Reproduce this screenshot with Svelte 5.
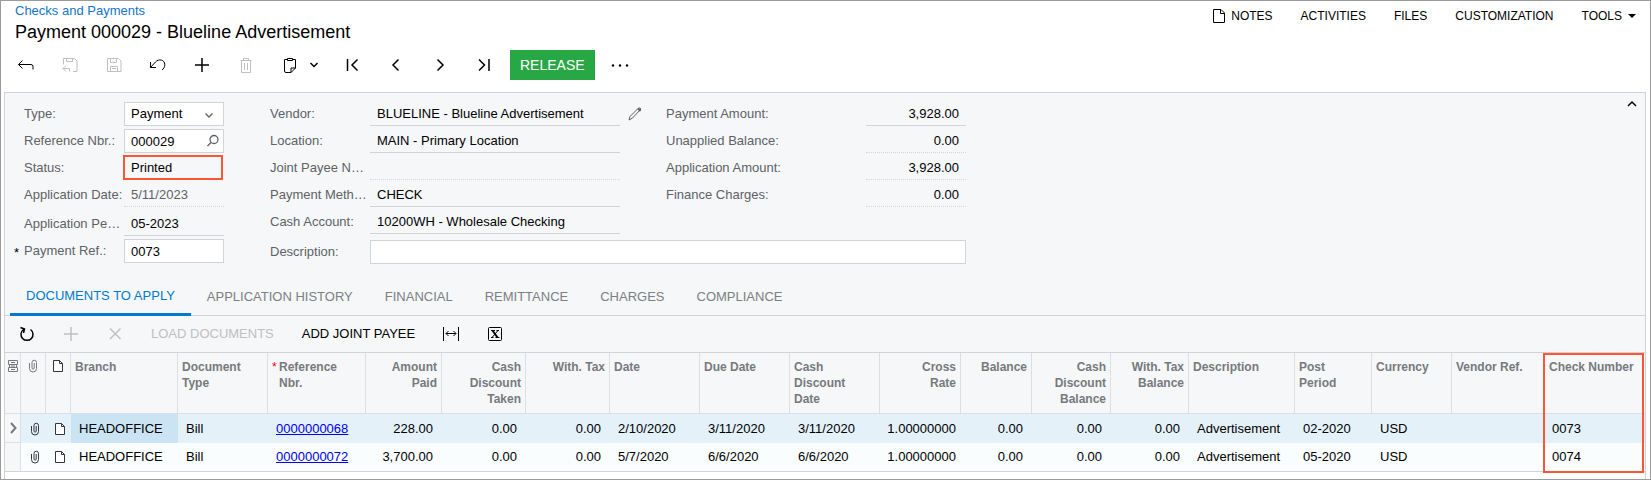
<script>
  const menu = ['ACTIVITIES', 'FILES', 'CUSTOMIZATION'];

  const left = [
    { id: 'type', label: 'Type:', value: 'Payment', kind: 'select' },
    { id: 'refnbr', label: 'Reference Nbr.:', value: '000029', kind: 'lookup' },
    { id: 'status', label: 'Status:', value: 'Printed', kind: 'marked' },
    { id: 'appdate', label: 'Application Date:', value: '5/11/2023', kind: 'dotted muted' },
    { id: 'period', label: 'Application Period:', value: '05-2023', kind: 'line' },
    { id: 'payref', label: 'Payment Ref.:', value: '0073', kind: 'box', required: true },
  ];

  const middle = [
    { id: 'vendor', label: 'Vendor:', value: 'BLUELINE - Blueline Advertisement', kind: 'line', edit: true },
    { id: 'location', label: 'Location:', value: 'MAIN - Primary Location', kind: 'line' },
    { id: 'joint', label: 'Joint Payee Name:', value: '', kind: 'dotted' },
    { id: 'method', label: 'Payment Method:', value: 'CHECK', kind: 'line' },
    { id: 'cash', label: 'Cash Account:', value: '10200WH - Wholesale Checking', kind: 'line' },
  ];

  const totals = [
    { id: 'amount', label: 'Payment Amount:', value: '3,928.00', kind: 'line' },
    { id: 'unapplied', label: 'Unapplied Balance:', value: '0.00', kind: 'dotted' },
    { id: 'applied', label: 'Application Amount:', value: '3,928.00', kind: 'dotted' },
    { id: 'charges', label: 'Finance Charges:', value: '0.00', kind: 'dotted' },
  ];

  const tabs = ['DOCUMENTS TO APPLY', 'APPLICATION HISTORY', 'FINANCIAL', 'REMITTANCE', 'CHARGES', 'COMPLIANCE'];
  let activeTab = $state('DOCUMENTS TO APPLY');

  const columns = [
    { label: 'Branch', width: 107 },
    { label: 'Document\nType', width: 90 },
    { label: 'Reference\nNbr.', width: 98, required: true, link: true },
    { label: 'Amount\nPaid', width: 76, num: true },
    { label: 'Cash\nDiscount\nTaken', width: 84, num: true },
    { label: 'With. Tax', width: 84, num: true },
    { label: 'Date', width: 90 },
    { label: 'Due Date', width: 90 },
    { label: 'Cash\nDiscount\nDate', width: 90 },
    { label: 'Cross\nRate', width: 81, num: true, tight: true },
    { label: 'Balance', width: 71, num: true },
    { label: 'Cash\nDiscount\nBalance', width: 79, num: true },
    { label: 'With. Tax\nBalance', width: 78, num: true },
    { label: 'Description', width: 106 },
    { label: 'Post\nPeriod', width: 77 },
    { label: 'Currency', width: 80 },
    { label: 'Vendor Ref.', width: 92 },
    { label: 'Check Number', width: 101 },
  ];

  const rows = [
    ['HEADOFFICE', 'Bill', '0000000068', '228.00', '0.00', '0.00', '2/10/2020', '3/11/2020', '3/11/2020', '1.00000000', '0.00', '0.00', '0.00', 'Advertisement', '02-2020', 'USD', '', '0073'],
    ['HEADOFFICE', 'Bill', '0000000072', '3,700.00', '0.00', '0.00', '5/7/2020', '6/6/2020', '6/6/2020', '1.00000000', '0.00', '0.00', '0.00', 'Advertisement', '05-2020', 'USD', '', '0074'],
  ];

  const icons = {
    back: 'M8.5 7.5l-4 4 4 4M4.5 11.5H17q2 0 2 2v3',
    saveClose: 'M5.5 11.5v-6h11l2.5 2.5v10.5h-4M8.5 5.5v3h6v-3M8 12.5l-3 3 3 3M5 15.5h6.5v3',
    save: 'M5.5 5.5h11l2.5 2.5v10.5h-13.5zM8.5 5.5v4h6v-4M8.5 18.5v-5h7v5M10 15.5h4',
    undo: 'M4.5 9v5.5h5.5M4.5 14.5L9.5 9C12.5 5.5 18.8 6.5 18.8 11.8c0 2.4-1.2 4-2.8 5.2',
    plus: 'M5 12h14M12 5v14',
    trash: 'M6.5 7.5h11M9.5 7.5v-2h5v2M7.5 7.5v12h9v-12M10.5 10v7M13.5 10v7',
    clip: 'M9.5 6.5h-3v11.500q0 1.500 1.500 1.500h5l4.500-4.500v-8.500h-3M9.5 7.500v-2h5v2zM13 19.500v-4.500h4.500',
    first: 'M7.5 6v12M17.5 6.5l-5.5 5.5 5.5 5.5',
    prev: 'M14.5 6.5l-5.5 5.5 5.5 5.5',
    next: 'M9.5 6.5l5.5 5.5-5.5 5.5',
    last: 'M7 6.5l5.5 5.5-5.5 5.5M17 6v12',
    cross: 'M7 6.5l10.5 10.5M17.5 6.5l-10.5 10.5',
    refresh: 'M8.5 7.5A6 6 0 1 0 15.500 7.500M5.500 5.500l4 1.500-1 4',
    fit: 'M4.5 5v14M19.5 5v14M7 11.5h10M9.5 9l-2.5 2.5 2.5 2.5M14.5 9l2.5 2.5-2.5 2.5',
  };
</script>

{#snippet icon(name, thick = false)}
  <svg class="icon" class:thick viewBox="0 0 24 24" aria-hidden="true"><path d={icons[name]} /></svg>
{/snippet}

{#snippet paperclip()}
  <svg class="small" viewBox="0 0 12 14" aria-hidden="true">
    <path d="M2.500 4v5.500a3.500 3.500 0 0 0 7 0V3.500a2 2 0 0 0-4.500 0V9a1 1 0 0 0 2.200 0V4" />
  </svg>
{/snippet}

{#snippet page()}
  <svg class="small" viewBox="0 0 12 14" aria-hidden="true">
    <path class="paper" d="M1.500 1.500h6l3 3v8h-9z" /><path d="M7.500 1.500v3h3" />
  </svg>
{/snippet}

{#snippet field(f, right = false)}
  <label for={f.id}>{f.label}</label>
  <div class="control {f.kind}" class:right>
    {#if f.kind === 'select'}
      <select id={f.id}><option>{f.value}</option></select>
      <svg class="inner" viewBox="0 0 16 16" aria-hidden="true"><path d="M2.500 6.500l3.500 3.500 3.500-3.500" /></svg>
    {:else}
      <input id={f.id} type="text" value={f.value} readonly={f.kind !== 'box' && f.kind !== 'lookup'} />
    {/if}
    {#if f.kind === 'lookup'}
      <svg class="inner" viewBox="0 0 16 16" aria-hidden="true"><circle cx="11" cy="5.500" r="4" /><path d="M8 8.500l-3.500 3.500" /></svg>
    {/if}
  </div>
{/snippet}

<div class="screen">
  <header>
    <div class="titles">
      <a class="crumb" href="#list">Checks and Payments</a>
      <h1>Payment 000029 - Blueline Advertisement</h1>
    </div>
    <nav>
      <button>
        <svg class="note" viewBox="0 0 12 14" aria-hidden="true"><path d="M.5.5h7.500l3.500 3.500v9.500H.5zM7.500.5v4h4" /></svg>
        NOTES
      </button>
      {#each menu as item}<button>{item}</button>{/each}
      <button>TOOLS <span class="caret"></span></button>
    </nav>
  </header>

  <div class="toolbar main">
    <button aria-label="Back">{@render icon('back')}</button>
    <button aria-label="Save and close" disabled>{@render icon('saveClose')}</button>
    <button aria-label="Save" disabled>{@render icon('save')}</button>
    <button aria-label="Undo">{@render icon('undo')}</button>
    <button aria-label="Add">{@render icon('plus', true)}</button>
    <button aria-label="Delete" disabled>{@render icon('trash')}</button>
    <button aria-label="Clipboard" class="split">
      {@render icon('clip')}
      <svg class="chev" viewBox="0 0 16 16" aria-hidden="true"><path d="M4.500 6l3.500 3.500L11.500 6" /></svg>
    </button>
    <button aria-label="First">{@render icon('first', true)}</button>
    <button aria-label="Previous">{@render icon('prev', true)}</button>
    <button aria-label="Next">{@render icon('next', true)}</button>
    <button aria-label="Last">{@render icon('last', true)}</button>
    <button class="release">RELEASE</button>
    <button aria-label="More">
      <svg class="icon dots" viewBox="0 0 24 24" aria-hidden="true"><circle cx="5" cy="12.500" r="1.200" /><circle cx="12" cy="12.500" r="1.200" /><circle cx="19" cy="12.500" r="1.200" /></svg>
    </button>
  </div>

  <main>
    <form onsubmit={(e) => e.preventDefault()}>
      <div class="group narrow">
        {#each left as f}
          <div class="row" class:spaced={f.id === 'period'} class:required={f.required}>{@render field(f)}</div>
        {/each}
      </div>
      <div class="wide">
        <div class="group middle">
          {#each middle as f}
            <div class="row">
              {@render field(f)}
              {#if f.edit}
                <button class="edit" type="button" aria-label="Edit vendor">
                  <svg viewBox="0 0 16 16" aria-hidden="true"><path d="M2 14l1-3.500 8.500-8.500q1.500-.5 2.500 1l-8.500 9z" /><path class="tip" d="M11 2.500l2.500 2.500" /></svg>
                </button>
              {/if}
            </div>
          {/each}
        </div>
        <div class="group totals">
          {#each totals as f}<div class="row">{@render field(f, true)}</div>{/each}
        </div>
        <div class="row description">{@render field({ id: 'descr', label: 'Description:', value: '', kind: 'box' })}</div>
      </div>
      <button class="collapse" type="button" aria-label="Collapse">
        <svg class="chev" viewBox="0 0 16 16" aria-hidden="true"><path d="M4 10l4-4 4 4" /></svg>
      </button>
    </form>

    <div class="tabs" role="tablist">
      {#each tabs as tab}
        <button role="tab" aria-selected={tab === activeTab} class:active={tab === activeTab} onclick={() => (activeTab = tab)}>{tab}</button>
      {/each}
    </div>

    <div class="toolbar grid">
      <button aria-label="Refresh">{@render icon('refresh', true)}</button>
      <button aria-label="Add row" disabled>{@render icon('plus', true)}</button>
      <button aria-label="Delete row" disabled>{@render icon('cross', true)}</button>
      <button class="text" disabled>LOAD DOCUMENTS</button>
      <button class="text">ADD JOINT PAYEE</button>
      <button aria-label="Fit to screen">{@render icon('fit')}</button>
      <button aria-label="Export to Excel">
        <svg class="icon" viewBox="0 0 24 24" aria-hidden="true">
          <rect x="5.500" y="5.500" width="13" height="13" rx="1" />
          <path class="fat" d="M9.500 8.500l5 7" /><path d="M15 8.500l-6 7M8 8.500h4M13.500 8.500H16M8 15.500h2.500M12.500 15.500H16.500" />
        </svg>
      </button>
    </div>

    <div class="table-wrap">
      <table>
        <colgroup>
          <col style="width: 16px" /><col style="width: 25px" /><col style="width: 25px" />
          {#each columns as c}<col style="width: {c.width}px" />{/each}
        </colgroup>
        <thead>
          <tr>
            <th class="tool" aria-label="Row settings">
              <svg class="small" viewBox="0 0 12 14" aria-hidden="true"><path d="M1.500 1.500h9v4h-9zM2.500 5.500h7v3h-7zM1.500 8.500h9v4h-9zM4 3.500h4M4 7h4M4 10.500h4" /></svg>
            </th>
            <th class="tool" aria-label="Files">{@render paperclip()}</th>
            <th class="tool dark" aria-label="Notes">{@render page()}</th>
            {#each columns as c}
              <th class:num={c.num} class:required={c.required}>{c.label}</th>
            {/each}
          </tr>
        </thead>
        <tbody>
          {#each rows as row, r}
            <tr class:selected={r === 0}>
              <td class="tool handle">
                {#if r === 0}<svg class="small" viewBox="0 0 12 14" aria-hidden="true"><path class="fat" d="M4 2l4.500 5L4 12" /></svg>{/if}
              </td>
              <td class="tool shifted">{@render paperclip()}</td>
              <td class="tool shifted">{@render page()}</td>
              {#each row as cell, i}
                <td class:num={columns[i].num} class:tight={columns[i].tight} class:current={r === 0 && i === 0}>
                  {#if columns[i].link}<a href="#{cell}">{cell}</a>{:else}{cell}{/if}
                </td>
              {/each}
            </tr>
          {/each}
        </tbody>
      </table>
      <div class="callout"></div>
    </div>
  </main>
</div>

<style>
  .screen,
  .screen * {
    box-sizing: border-box;
  }
  .screen {
    border: 1px solid #9b9b9b;
    background: #fff;
    color: #000;
    font: 13px/16px "Liberation Sans", Arial, sans-serif;
  }
  button,
  input,
  select {
    margin: 0;
    padding: 0;
    border: 0;
    border-radius: 0;
    background: none;
    color: inherit;
    font: inherit;
    outline: none;
  }
  svg {
    display: block;
    flex: none;
    fill: none;
    stroke: currentColor;
  }

  header {
    display: flex;
    justify-content: space-between;
    height: 42px;
    padding: 2px 14px 0 14px;
  }
  .crumb {
    display: block;
    color: #1176c8;
    text-decoration: none;
  }
  h1 {
    margin: 0;
    font-size: 18px;
    font-weight: 400;
    line-height: 26px;
  }
  nav {
    display: flex;
    align-items: center;
    gap: 28px;
    height: 26px;
    font-size: 12px;
  }
  nav button {
    display: flex;
    align-items: center;
    gap: 6px;
  }
  .note {
    width: 12px;
    height: 14px;
  }
  .caret {
    border: 4px solid transparent;
    border-top-color: #000;
    border-bottom: 0;
  }

  .toolbar {
    display: flex;
    align-items: center;
  }
  .toolbar button {
    display: flex;
    align-items: center;
    justify-content: center;
    width: 44px;
    height: 30px;
  }
  .toolbar button:disabled {
    color: #bfc0c2;
  }
  .toolbar.main {
    height: 49px;
    padding: 0 0 5px 3px;
  }
  .icon {
    width: 24px;
    height: 24px;
  }
  .thick {
    stroke-width: 1.5;
  }
  .fat {
    stroke-width: 2;
  }
  .dots {
    fill: currentColor;
    stroke: none;
  }
  .toolbar .split {
    justify-content: flex-start;
    gap: 4px;
    width: 62px;
    padding-left: 10px;
  }
  .chev {
    width: 16px;
    height: 16px;
    stroke-width: 1.5;
  }
  .toolbar .release {
    width: auto;
    margin: 0 3px 0 4px;
    padding: 0 10px;
    background: #28a745;
    color: #fff;
    font-size: 14px;
  }

  main {
    margin: 0 4px 0 3px;
    padding-bottom: 7px;
    border: 1px solid #d0d3d7;
    border-bottom: 0;
    background: linear-gradient(#fff, #fff) bottom / 100% 7px no-repeat #f5f7f9;
  }
  form {
    display: flex;
    padding: 9px 0 15px 19px;
  }
  .group {
    display: flex;
    flex-direction: column;
    gap: 3px;
  }
  .narrow {
    width: 200px;
    margin-right: 46px;
  }
  .wide {
    display: grid;
    grid-template-columns: 396px 300px;
    row-gap: 6px;
  }
  .row {
    display: flex;
    align-items: center;
    height: 24px;
  }
  .spaced {
    margin-top: 2px;
  }
  label {
    flex: none;
    width: 99px;
    margin-right: 1px;
    overflow: hidden;
    color: #5e6266;
    text-overflow: ellipsis;
    white-space: nowrap;
  }
  .totals label {
    width: 199px;
  }
  .row.required {
    position: relative;
  }
  .row.required::before {
    content: "*";
    position: absolute;
    top: 6px;
    left: -10px;
  }
  .control {
    position: relative;
    flex: none;
    width: 100px;
    height: 24px;
    border-bottom: 1px solid #d0d3d7;
  }
  .middle .control {
    width: 250px;
  }
  .description {
    grid-column: 1 / -1;
  }
  .description .control {
    flex: 1;
  }
  .control.box,
  .control.select,
  .control.lookup {
    border: 1px solid #d0d3d7;
    background: #fff;
  }
  .control.dotted {
    border-bottom: 1px dotted #d3d6da;
  }
  .control.muted {
    color: #5e6266;
  }
  .control.marked {
    border-color: transparent;
  }
  .control.marked::after {
    content: "";
    position: absolute;
    inset: -1px 1px -1px -1px;
    border: 2px solid #ff5533;
  }
  .control input,
  .control select {
    display: block;
    width: 100%;
    height: 100%;
    padding: 0 7px;
    appearance: none;
  }
  .control.box input,
  .control.select select,
  .control.lookup input {
    padding: 0 6px;
  }
  .right input {
    text-align: right;
  }
  .inner {
    position: absolute;
    top: 4px;
    right: 4px;
    width: 16px;
    height: 16px;
    color: #5e6266;
    stroke-width: 1.3;
    pointer-events: none;
  }
  .edit {
    margin-left: 7px;
    color: #5e6266;
  }
  .edit svg {
    width: 16px;
    height: 16px;
  }
  .tip {
    stroke-width: 2;
  }
  .collapse {
    display: flex;
    align-items: center;
    justify-content: center;
    width: 26px;
    height: 22px;
    margin: -9px 0 0 auto;
  }

  .tabs {
    display: flex;
    height: 37px;
    padding-left: 5px;
    border-bottom: 1px solid #d0d3d7;
  }
  .tabs button {
    height: 37px;
    padding: 2px 16px 0;
    border-bottom: 3px solid transparent;
    color: #7c8084;
    white-space: nowrap;
  }
  .tabs .active {
    padding-top: 0;
    border-color: #027acc;
    color: #027acc;
  }

  .toolbar.grid {
    height: 36px;
  }
  .toolbar .text {
    width: auto;
    padding: 0 14px;
    white-space: nowrap;
  }

  .table-wrap {
    position: relative;
    border-top: 1px solid #d0d3d7;
  }
  table {
    width: 100%;
    border-collapse: separate;
    border-spacing: 0;
    table-layout: fixed;
  }
  th {
    height: 61px;
    padding: 6px 4px 0;
    border-right: 1px solid #dcdfe3;
    border-bottom: 1px solid #dcdfe3;
    color: #777a7d;
    font-size: 12px;
    text-align: left;
    vertical-align: top;
    white-space: pre-line;
  }
  th:last-child {
    padding-left: 5px;
    border-right: 0;
  }
  th.num,
  td.num {
    text-align: right;
  }
  th.required {
    position: relative;
    padding-left: 11px;
  }
  th.required::before {
    content: "*";
    position: absolute;
    left: 4px;
    color: #f00;
    font-weight: 400;
  }
  td {
    height: 29px;
    padding: 0 9px 0 8px;
    background: #f9fdfe;
    white-space: nowrap;
  }
  td.tight {
    padding: 0 5px 0 0;
  }
  .selected td {
    background: #e4f1f9;
  }
  .selected .current {
    background: #cae4f4;
  }
  tbody tr:last-child td {
    border-bottom: 1px solid #d0d3d7;
  }
  td a {
    color: #0000ee;
  }
  th.tool,
  td.tool {
    padding-right: 0;
    padding-left: 0;
  }
  .tool .small {
    width: 12px;
    height: 14px;
    margin: 0 auto;
  }
  th.dark,
  td.shifted {
    color: #33363a;
  }
  td.shifted {
    padding-left: 3px;
  }
  .paper {
    fill: #fff;
  }
  tbody tr .handle,
  .selected .handle {
    border-right: 1px solid #dcdfe3;
    border-bottom: 1px solid #dcdfe3;
    background: #f5f7f9;
    color: #777a7d;
  }
  .callout {
    position: absolute;
    top: 0;
    right: 1px;
    bottom: -1px;
    width: calc(100% * 101 / 1640);
    border: 2px solid #ff5533;
    pointer-events: none;
  }
</style>
